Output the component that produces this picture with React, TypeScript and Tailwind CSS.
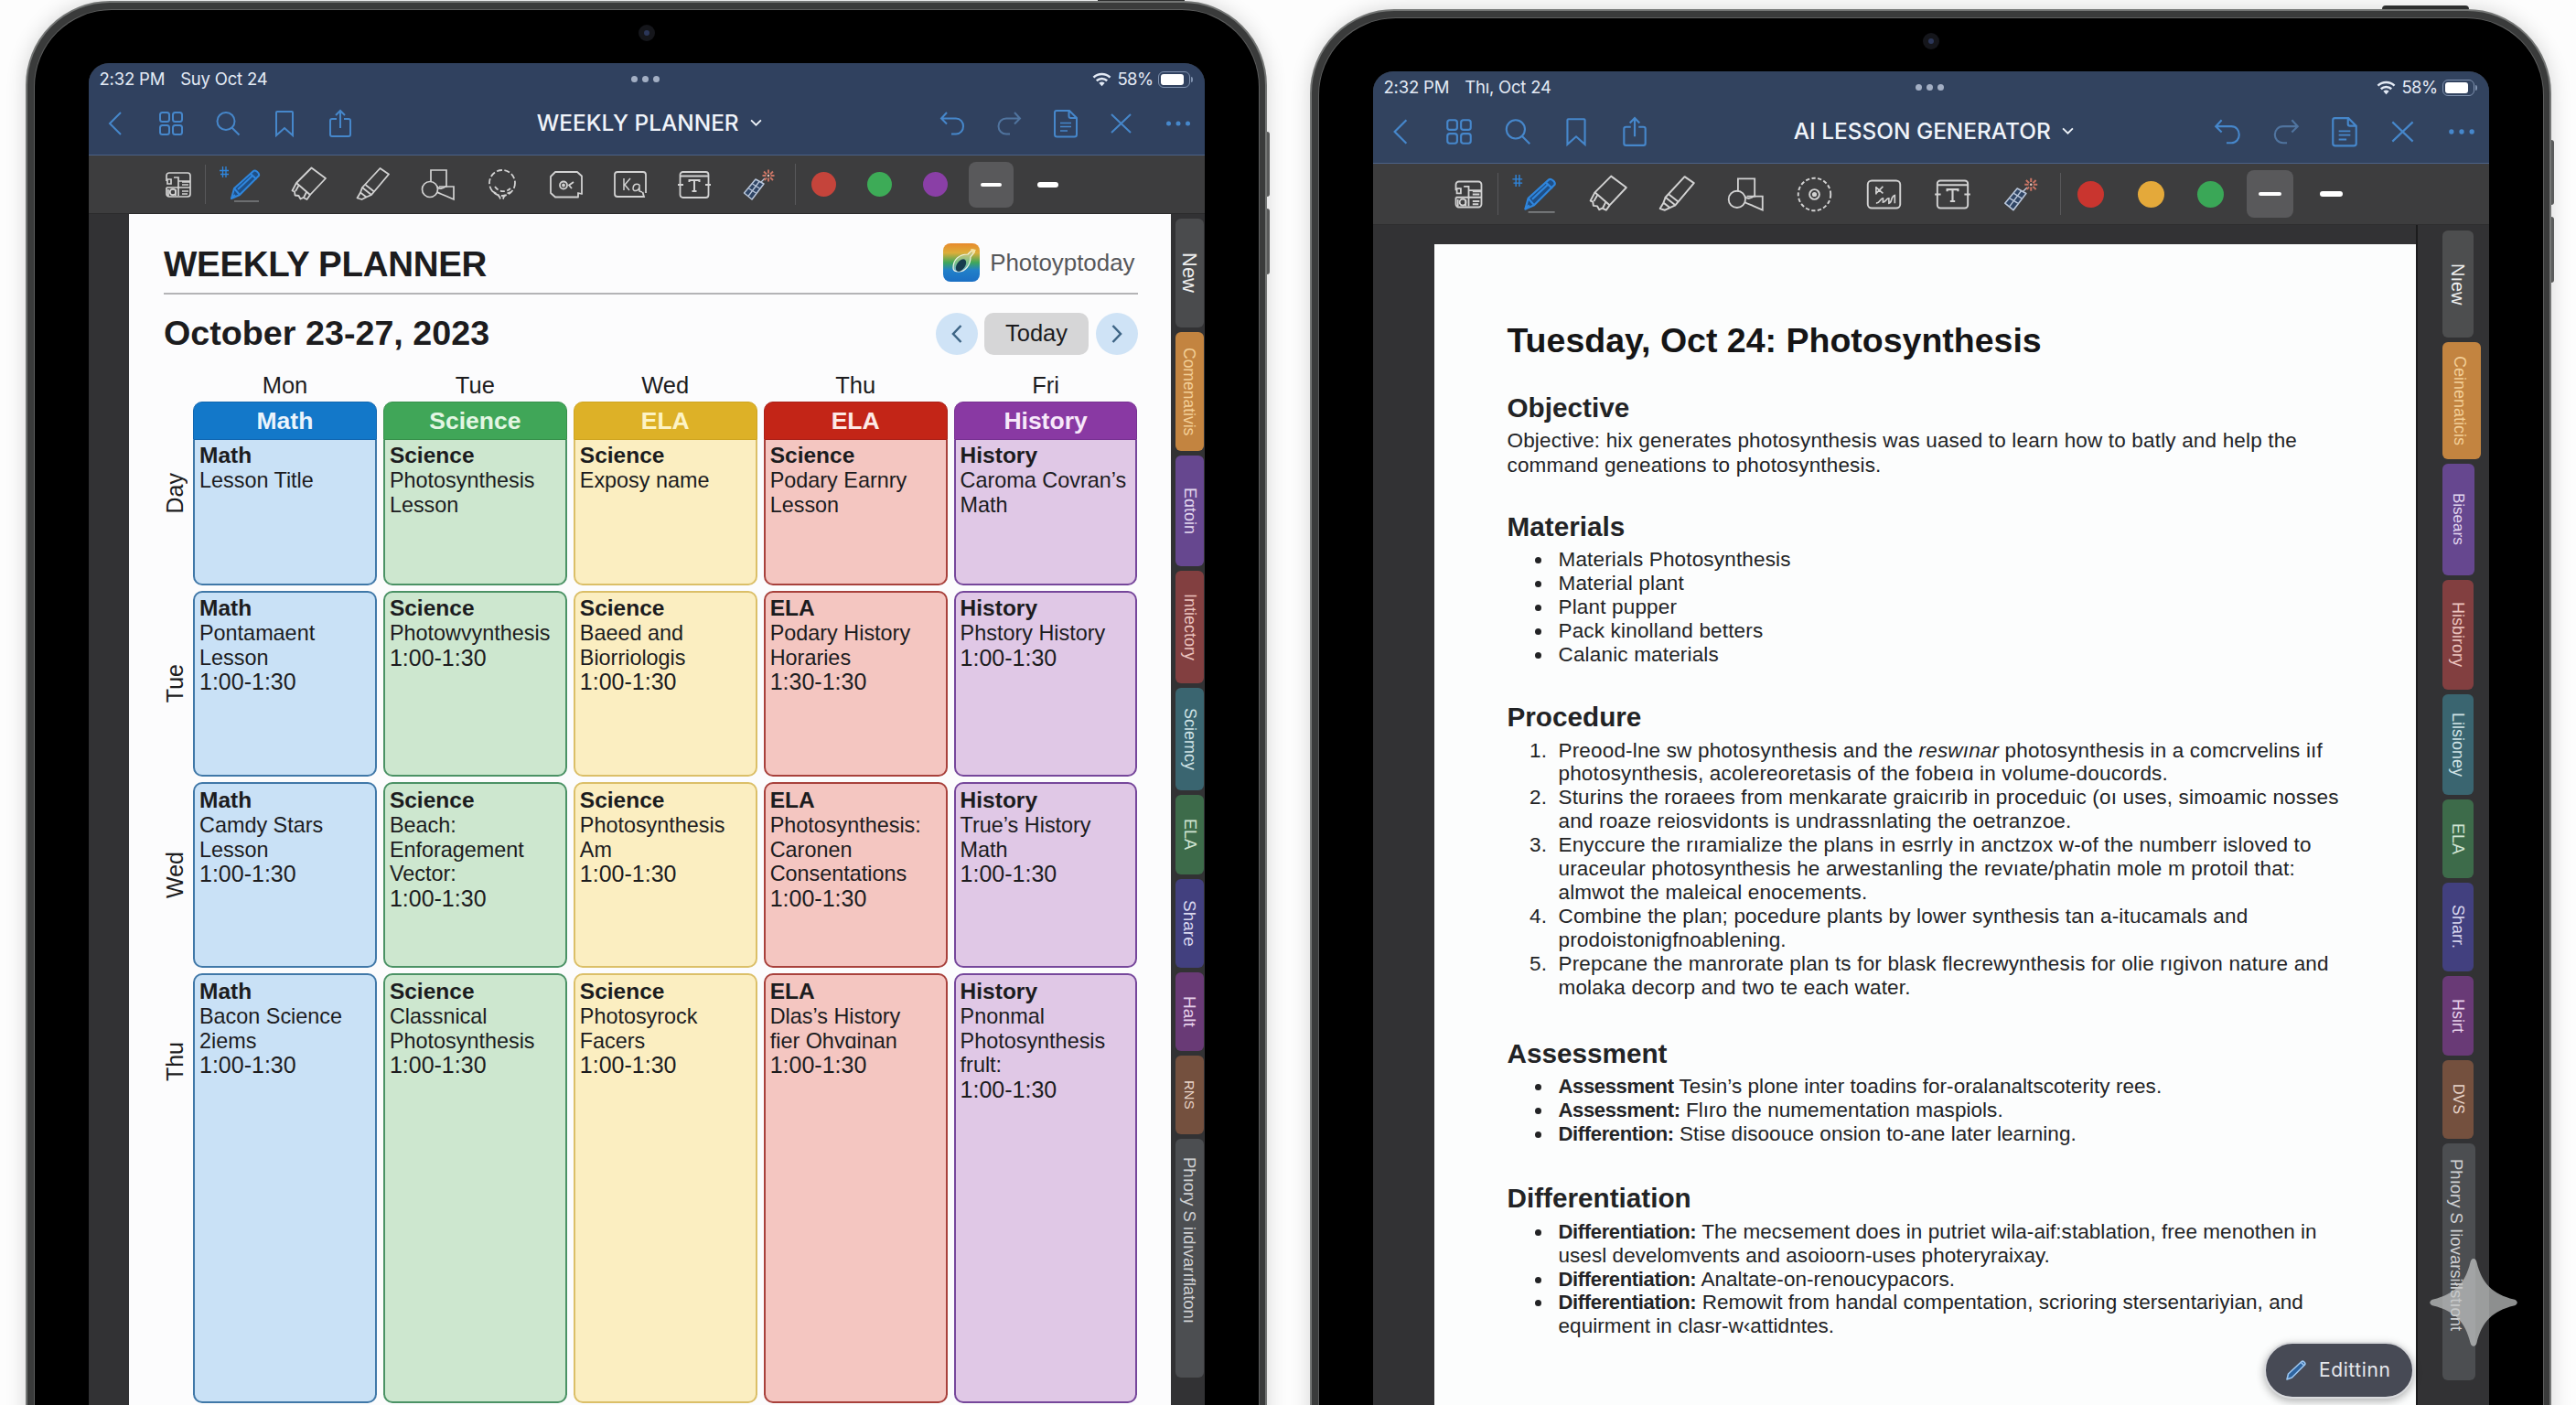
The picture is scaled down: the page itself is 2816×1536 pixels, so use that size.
import type { ReactNode } from "react";

type IconProps = { className?: string };

const ArrowLeftIcon = ({ className }: IconProps) => (
  <svg viewBox="0 0 32 32" className={className} fill="none" stroke="currentColor" strokeWidth="2">
    <path d="M22 4 10 16l12 12" />
  </svg>
);

const GridIcon = ({ className }: IconProps) => (
  <svg viewBox="0 0 32 32" className={className} fill="none" stroke="currentColor" strokeWidth="2">
    <rect x="4" y="4" width="10" height="10" rx="2.5" />
    <rect x="18" y="4" width="10" height="10" rx="2.5" />
    <rect x="4" y="18" width="10" height="10" rx="2.5" />
    <rect x="18" y="18" width="10" height="10" rx="2.5" />
  </svg>
);

const SearchIcon = ({ className }: IconProps) => (
  <svg viewBox="0 0 32 32" className={className} fill="none" stroke="currentColor" strokeWidth="2">
    <circle cx="14" cy="13.5" r="9.5" />
    <path d="m20.5 20.5 8 8" />
  </svg>
);

const BookmarkIcon = ({ className }: IconProps) => (
  <svg viewBox="0 0 32 32" className={className} fill="none" stroke="currentColor" strokeWidth="2">
    <path d="M7 4a1 1 0 0 1 1-1h16a1 1 0 0 1 1 1v25l-9-8-9 8z" />
  </svg>
);

const ShareIcon = ({ className }: IconProps) => (
  <svg viewBox="0 0 32 32" className={className} fill="none" stroke="currentColor" strokeWidth="2">
    <path d="M12 11H7a2 2 0 0 0-2 2v15a2 2 0 0 0 2 2h18a2 2 0 0 0 2-2V13a2 2 0 0 0-2-2h-5M16 21V2M11 7l5-5 5 5" />
  </svg>
);

const UndoIcon = ({ className }: IconProps) => (
  <svg viewBox="0 0 32 32" className={className} fill="none" stroke="currentColor" strokeWidth="2">
    <path d="M10 4 4 10.500l6 6M4 10.500h16c5 0 8 4 8 8.500s-3 8.500-8 8.500h-5" />
  </svg>
);

const RedoIcon = ({ className }: IconProps) => (
  <svg viewBox="0 0 32 32" className={className} fill="none" stroke="currentColor" strokeWidth="2">
    <path d="m22 4 6 6.500-6 6M28 10.500H13c-5 0-8.500 4-8.500 8.500s3.500 8.500 8.500 8.500h4" />
  </svg>
);

const DocIcon = ({ className }: IconProps) => (
  <svg viewBox="0 0 32 32" className={className} fill="none" stroke="currentColor" strokeWidth="2">
    <path d="M6 2h14l8 8v18a2.500 2.500 0 0 1-2.500 2.500h-19A2.500 2.500 0 0 1 4 28V4a2 2 0 0 1 2-2zM19.500 2v6a2 2 0 0 0 2 2H28" />
    <path d="M10 15.500h12M10 19.500h12M10 24h8" strokeWidth="1.700" />
  </svg>
);

const CloseIcon = ({ className }: IconProps) => (
  <svg viewBox="0 0 32 32" className={className} fill="none" stroke="currentColor" strokeWidth="2">
    <path d="m5 6 21 20M26 6 5 26" />
  </svg>
);

const MoreIcon = ({ className }: IconProps) => (
  <svg viewBox="0 0 32 32" className={className} fill="currentColor">
    <circle cx="5.500" cy="16" r="2.500" />
    <circle cx="16" cy="16" r="2.500" />
    <circle cx="26.500" cy="16" r="2.500" />
  </svg>
);

const PlannerIcon = ({ className }: IconProps) => (
  <svg viewBox="0 0 40 40" className={className} fill="none" stroke="currentColor" strokeWidth="1.700">
    <path d="M7 16V10a3 3 0 0 1 3-3h20a3 3 0 0 1 3 3v20a3 3 0 0 1-3 3H10a3 3 0 0 1-3-3v-7" />
    <path d="M8 14h4v5H8zM15 12h5v7M7 23h26M20 12v20M24 17h9M24 20h7M24 27h7M24 30h6M20 16h13" />
    <circle cx="14" cy="28" r="3.200" />
    <path d="M9 25v7M17 25v7" />
  </svg>
);

const PenIcon = ({ className }: IconProps) => (
  <svg viewBox="0 0 40 40" className={className} fill="none" stroke="#2f86dd" strokeWidth="2" strokeLinejoin="round">
    <path d="M-8 4.500H2M-7 8.500H2M-4.500 0v12M-1 0v12" strokeWidth="1.300" />
    <path d="m5 35 3-11L29 5c2-1.500 7 2 6 5L14 31z" fill="#1f4f86" />
    <path d="m8 24 6 7M26 8l6.500 6M12 25 28 10M5 35l4-4" />
    <path d="M8 38h27" stroke="#7d7f82" strokeWidth="1.500" />
  </svg>
);

const EraserIcon = ({ className }: IconProps) => (
  <svg viewBox="0 0 40 40" className={className} fill="none" stroke="currentColor" strokeWidth="1.800" strokeLinejoin="round">
    <path d="M22.500 1.500 38 13 21 31 6 18z" />
    <path d="m6 18-4.500 8.500 2.500 1 .5 4 4 .5 2 3.500 3-1.500 4 2L21 31M9 20l-4 7M17 28l-3 6" />
  </svg>
);

const HighlighterIcon = ({ className }: IconProps) => (
  <svg viewBox="0 0 40 40" className={className} fill="none" stroke="currentColor" strokeWidth="1.800" strokeLinejoin="round">
    <path d="M27.500 2 37 8.500 18 31 8 23z" />
    <path d="m8 23-2 5.500 6.500 5L18 31M6 28.500l-3.500 6 5 1.500 5-2.500M11.500 20l9.500 7.500" />
  </svg>
);

const ShapesIcon = ({ className }: IconProps) => (
  <svg viewBox="0 0 40 40" className={className} fill="none" stroke="currentColor" strokeWidth="1.700">
    <path d="M12 17V4h17v18h-8" />
    <circle cx="11" cy="25" r="8.500" />
    <path d="M19 22c2 4 8 1 9 0h9v14l-9-4c-4-2-6-2-9-4" />
  </svg>
);

const LassoIcon = ({ className }: IconProps) => (
  <svg viewBox="0 0 40 40" className={className} fill="none" stroke="currentColor" strokeWidth="1.800">
    <circle cx="20" cy="18" r="14" strokeDasharray="6 2.500" />
    <path d="M9 27c3 2 7 3 9 8h3c1-4 5-6 8-7M12 22c4 6 12 7 17 2" strokeDasharray="5 2.500" />
  </svg>
);

const TargetLassoIcon = ({ className }: IconProps) => (
  <svg viewBox="0 0 40 40" className={className} fill="none" stroke="currentColor" strokeWidth="1.800">
    <circle cx="20" cy="20" r="16.500" strokeDasharray="4 2.200" />
    <circle cx="20" cy="20" r="5" />
    <circle cx="20" cy="20" r="1.500" fill="currentColor" />
  </svg>
);

const ImageIcon = ({ className }: IconProps) => (
  <svg viewBox="0 0 40 40" className={className} fill="none" stroke="currentColor" strokeWidth="1.800">
    <path d="M8 6h24l5 4.500V30l-4-1v4.500H8L3 29V11z" strokeLinejoin="round" />
    <circle cx="17" cy="20.500" r="4" />
    <circle cx="17" cy="20.500" r="1" />
    <path d="m28 17-5 3.500 3 3.500" />
  </svg>
);

const TextImageIcon = ({ className }: IconProps) => (
  <svg viewBox="0 0 40 40" className={className} fill="none" stroke="currentColor" strokeWidth="1.800">
    <path d="M37 29V9a3 3 0 0 0-3-3H6a3 3 0 0 0-3 3v21a3 3 0 0 0 3 3h29l-1.500-5" />
    <path d="M13 13v13M20 13l-6 7 5 6M30 20c-4-2-7 0-7 4s6 3 7-1v-3 7l3 1" strokeWidth="1.500" />
  </svg>
);

const SketchImageIcon = ({ className }: IconProps) => (
  <svg viewBox="0 0 40 40" className={className} fill="none" stroke="currentColor" strokeWidth="1.800">
    <rect x="3.500" y="6" width="33" height="28" rx="4" />
    <path d="M12 12v8M12 13l7 6M19 12l-7 7M12 29c4 0 4-5 7-5v4c3 0 3-4 6-4v5c4-1 1-6 6-8v8" strokeWidth="1.500" />
  </svg>
);

const TextBoxIcon = ({ className }: IconProps) => (
  <svg viewBox="0 0 40 40" className={className} fill="none" stroke="currentColor" strokeWidth="1.800">
    <path d="M4.500 17V9a3 3 0 0 1 3-3h25a3 3 0 0 1 3 3v8M35.500 23v8a3 3 0 0 1-3 3h-25a3 3 0 0 1-3-3v-8M5 10.500h30M2 20h6M32 20h6M4.500 17v6M35.500 17v6" />
    <path d="M14.500 17v-2h11v2M20 15v12M17.500 27h5" strokeWidth="2" />
  </svg>
);

const LaserIcon = ({ className }: IconProps) => (
  <svg viewBox="0 0 40 40" className={className} fill="none" strokeWidth="1.500" strokeLinejoin="round">
    <path d="m3.500 29 12.500-15 9 5-13 17z" stroke="#b9c6da" fill="#2f4565" />
    <path d="m12.500 19 8 5M8.500 24l8 5M8 32.500 20 16.500M22 17l4-4" stroke="#b9c6da" strokeWidth="1.300" />
    <path d="M30 3.500v4M30 12.500v4M23.500 10h4M32.500 10h4M25 5.500l3 3M35 5.500l-3 3M25.500 15l2.500-2.500M35 15l-3-3" stroke="#c97565" strokeWidth="1.900" />
    <circle cx="30" cy="10" r="1.200" fill="#ecc9be" />
  </svg>
);

const WifiIcon = ({ className }: IconProps) => (
  <svg viewBox="0 0 22 16" className={className} fill="none" stroke="currentColor" strokeWidth="2.600">
    <path d="M1.500 5.500c5.500-5 13.500-5 19 0M5 9.300c3.500-3.200 8.500-3.200 12 0" />
    <path d="M11 15.500 7.700 12c2-1.700 4.600-1.700 6.600 0z" fill="currentColor" stroke="none" />
  </svg>
);

const StatusBar = ({ date }: { date: string }) => (
  <div className="grid h-[35px] grid-cols-3 items-center pr-[13px] pl-3 font-['Inter',sans-serif] text-[18.5px] text-[#e3eaf5]">
    <div className="flex gap-[17px] whitespace-nowrap">
      <span className="tracking-[-0.2px]">2:32 PM</span>
      <span className="tracking-[-0.2px]">{date}</span>
    </div>
    <div className="flex justify-center gap-[5px]">
      <i className="size-[7px] rounded-full bg-[#a3afc4]" />
      <i className="size-[7px] rounded-full bg-[#a3afc4]" />
      <i className="size-[7px] rounded-full bg-[#a3afc4]" />
    </div>
    <div className="flex items-center justify-end">
      <WifiIcon className="mr-1.5 h-4 w-[21px]" />
      <span className="mr-[5px] tracking-[-0.6px]">58%</span>
      <div className="h-[18px] w-[35px] rounded-[6px] border-[1.5px] border-[#7f91ae] p-[2px]">
        <div className="h-full w-[25px] rounded-[3px] bg-white" />
      </div>
      <i className="ml-px h-1.5 w-[2px] rounded-r bg-[#7f91ae]" />
    </div>
  </div>
);

const NavBar = ({ title, large }: { title: string; large?: boolean }) => {
  const cell = large ? "flex w-16 justify-center" : "flex w-[61.600px] justify-center";
  const icon = large ? "size-[34px]" : "size-8";

  return (
    <div className="-mr-[2px] -ml-[1.500px] flex h-[61px] items-center justify-between text-[#4687cb]">
      <div className="flex">
        <div className={cell}><ArrowLeftIcon className={icon} /></div>
        <div className={cell}><GridIcon className={icon} /></div>
        <div className={cell}><SearchIcon className={icon} /></div>
        <div className={cell}><BookmarkIcon className={icon} /></div>
        <div className={cell}><ShareIcon className={icon} /></div>
      </div>
      <div className="flex items-center gap-3 pl-1.5 font-['Inter',sans-serif] text-[24.400px] font-medium text-[#f0f4fa]">
        {title}
        <svg viewBox="0 0 14 10" className="h-[9px] w-[13px]" fill="none" stroke="currentColor" strokeWidth="2">
          <path d="m1 1.500 6 6 6-6" />
        </svg>
      </div>
      <div className="flex">
        <div className={cell}><UndoIcon className={icon} /></div>
        <div className={`${cell} text-[#50749f]`}><RedoIcon className={icon} /></div>
        <div className={cell}><DocIcon className={icon} /></div>
        <div className={cell}><CloseIcon className={icon} /></div>
        <div className={cell}><MoreIcon className={icon} /></div>
      </div>
    </div>
  );
};

type ToolIcon = (props: IconProps) => ReactNode;

const weeklyTools: ToolIcon[] = [
  PenIcon,
  EraserIcon,
  HighlighterIcon,
  ShapesIcon,
  LassoIcon,
  ImageIcon,
  TextImageIcon,
  TextBoxIcon,
  LaserIcon,
];

const lessonTools: ToolIcon[] = [
  PenIcon,
  EraserIcon,
  HighlighterIcon,
  ShapesIcon,
  TargetLassoIcon,
  SketchImageIcon,
  TextBoxIcon,
  LaserIcon,
];

const WeeklyToolbar = () => (
  <div className="flex h-16 items-center border-b border-[#2a2a2b] bg-[#3d3d3e] pl-[78.500px] text-[#d2d2d2]">
    <PlannerIcon className="size-10" />
    <i className="ml-[9px] h-[43px] w-px bg-[#58585a]" />
    <div className="ml-[8px] flex">
      {weeklyTools.map((Tool, i) => (
        <div key={i} className="flex w-[70.200px] justify-center">
          <Tool className="size-10 overflow-visible" />
        </div>
      ))}
    </div>
    <i className="ml-[4px] h-[45px] w-px bg-[#58585a]" />
    <div className="flex items-center">
      {["bg-[#c5443b]", "bg-[#3dab57]", "bg-[#8a3fa6]"].map((color) => (
        <div key={color} className="flex w-[61px] justify-center">
          <i className={`size-[27px] rounded-full ${color}`} />
        </div>
      ))}
      <div className="ml-1.5 flex h-[50px] w-[49px] items-center justify-center rounded-lg bg-[#59595b]">
        <i className="h-1 w-[23px] rounded-sm bg-white" />
      </div>
      <i className="ml-[26px] h-[6px] w-[23px] rounded-sm bg-white" />
    </div>
  </div>
);

const LessonToolbar = () => (
  <div className="flex h-[67px] items-center border-b border-[#2e2e2f] bg-[#3d3d3e] pl-[83px] text-[#d2d2d2]">
    <PlannerIcon className="size-[43px]" />
    <i className="ml-[10px] h-[46px] w-px bg-[#58585a]" />
    <div className="ml-[8px] flex">
      {lessonTools.map((Tool, i) => (
        <div key={i} className="flex w-[75.200px] justify-center">
          <Tool className="size-[43px] overflow-visible" />
        </div>
      ))}
    </div>
    <i className="ml-[5px] h-[46px] w-px bg-[#58585a]" />
    <div className="flex items-center">
      {["bg-[#c9352f]", "bg-[#e4a93a]", "bg-[#3aa757]"].map((color) => (
        <div key={color} className="flex w-[65.500px] justify-center">
          <i className={`size-[29px] rounded-full ${color}`} />
        </div>
      ))}
      <div className="ml-1.5 flex h-[52px] w-[51px] items-center justify-center rounded-lg bg-[#59595b]">
        <i className="h-1 w-[25px] rounded-sm bg-white" />
      </div>
      <i className="ml-[29px] h-[6px] w-[25px] rounded-sm bg-white" />
    </div>
  </div>
);

const Tablet = ({ children, className }: { children: ReactNode; className: string }) => (
  <div
    className={`relative h-[1700px] shrink-0 rounded-[92px] border-2 border-[#747675] bg-[#3a3b3b] p-[7.500px] shadow-[0_0_22px_rgba(0,0,0,0.16)] ${className}`}
  >
    {/* power and volume buttons */}
    <div className="absolute -top-[6px] right-[88px] h-1 w-[95px] rounded-t-sm bg-[#2e2f2f]" />
    <div className="absolute top-[141px] -right-[5px] h-[71px] w-[3px] rounded-r-sm bg-[#5a5b5b]" />
    <div className="absolute top-[225px] -right-[5px] h-[72px] w-[3px] rounded-r-sm bg-[#5a5b5b]" />
    <div className="relative h-full rounded-[84px] bg-black px-[59px] pt-[58.500px] ring-1 ring-[#5d5e5e]">
      <div className="absolute top-[16px] left-1/2 flex size-[18px] -translate-x-1/2 items-center justify-center rounded-full bg-[#15161b]">
        <i className="size-[6px] rounded-full bg-[#2b3658]" />
      </div>
      <div className="h-full overflow-hidden rounded-t-[22px] bg-[#323234]">{children}</div>
    </div>
  </div>
);

const weeklyTabs = [
  { label: "New", style: "h-[119px] bg-[#4a4b4d] text-[22px] text-[#eeeeee]" },
  { label: "Comenativis", style: "h-[130px] bg-[#c38440] text-[17.500px] text-[#f3cf97]" },
  { label: "Eɑtoin", style: "h-[121px] bg-[#66478f] text-[18px] text-[#e3d8f0]" },
  { label: "Intiectory", style: "h-[123px] bg-[#823f40] text-[18px] text-[#ecc4bf]" },
  { label: "Sciemcy", style: "h-[112px] bg-[#3a6570] text-[18px] text-[#d0e3e6]" },
  { label: "ELA", style: "h-[87px] bg-[#3d6b4a] text-[18px] text-[#cfe3d2]" },
  { label: "Share", style: "h-[97px] bg-[#42407f] text-[19px] text-[#dad8ef]" },
  { label: "Halt", style: "h-[86px] bg-[#693a76] text-[19px] text-[#e6d0ea]" },
  { label: "RNS", style: "h-[86px] bg-[#74503e] text-[15px] text-[#e9d5ca]" },
  { label: "Phıory S iıdıvarıflatonı", style: "h-[261px] bg-[#4c4e51] pb-[38px] text-[18.500px] text-[#cfd0d2]" },
];

const lessonTabs = [
  { label: "Nıew", style: "h-[117px] w-[34px] bg-[#4d4e4f] text-[20px] text-[#eeeeee]" },
  { label: "Ceinenaticis", style: "h-[128px] w-[42px] pr-[5px] bg-[#c38440] text-[18px] text-[#f3cf97]" },
  { label: "Bisears", style: "h-[121.500px] w-[35px] bg-[#66478f] text-[17px] text-[#e3d8f0]" },
  { label: "Hisbirory", style: "h-[120.500px] w-[34px] bg-[#823f40] text-[18px] text-[#ecc4bf]" },
  { label: "Lilsioney", style: "h-[110px] w-[34px] bg-[#3a6570] text-[18px] text-[#d0e3e6]" },
  { label: "ELA", style: "h-[85.500px] w-[34px] bg-[#3d6b4a] text-[18px] text-[#cfe3d2]" },
  { label: "Sharr.", style: "h-[97px] w-[34px] bg-[#42407f] text-[18px] text-[#dad8ef]" },
  { label: "Hsirt", style: "h-[87px] w-[34px] bg-[#693a76] text-[18px] text-[#e6d0ea]" },
  { label: "DVS", style: "h-[86px] w-[34px] bg-[#74503e] text-[16px] text-[#e9d5ca]" },
  { label: "Phıory S Iiovarsiłlstıont", style: "h-[259px] w-[36px] bg-[#4c4e51] pb-[36px] pr-[4px] text-[18.500px] text-[#cfd0d2]" },
];

const SideTab = ({ label, style }: { label: string; style: string }) => (
  <div
    className={`flex shrink-0 items-center justify-center rounded-[6px] whitespace-nowrap [writing-mode:vertical-rl] ${style}`}
  >
    {label}
  </div>
);

const columns = [
  {
    day: "Mon",
    subject: "Math",
    header: "border-[#1166b0] bg-[#1378c9] text-[#eaf4fc]",
    cell: "border-[#4078a8] bg-[#c9e1f6]",
    entries: [
      ["Math", "Lesson Title"],
      ["Math", "Pontamaent", "Lesson", "1:00-1:30"],
      ["Math", "Camdy Stars", "Lesson", "1:00-1:30"],
      ["Math", "Bacon Science", "2iems", "1:00-1:30"],
    ],
  },
  {
    day: "Tue",
    subject: "Science",
    header: "border-[#37904b] bg-[#40a658] text-[#e3f6e3]",
    cell: "border-[#4b9265] bg-[#cde7cf]",
    entries: [
      ["Science", "Photosynthesis", "Lesson"],
      ["Science", "Photowvynthesis", "1:00-1:30"],
      ["Science", "Beach:", "Enforagement", "Vector:", "1:00-1:30"],
      ["Science", "Classnical", "Photosynthesis", "1:00-1:30"],
    ],
  },
  {
    day: "Wed",
    subject: "ELA",
    header: "border-[#cfa521] bg-[#ddb127] text-[#fdf3c4]",
    cell: "border-[#dbbf68] bg-[#fbeec1]",
    entries: [
      ["Science", "Exposy name"],
      ["Science", "Baeed and", "Biorriologis", "1:00-1:30"],
      ["Science", "Photosynthesis", "Am", "1:00-1:30"],
      ["Science", "Photosyrock", "Facers", "1:00-1:30"],
    ],
  },
  {
    day: "Thu",
    subject: "ELA",
    header: "border-[#a92119] bg-[#c32517] text-[#fde9e6]",
    cell: "border-[#a8413c] bg-[#f4c6c1]",
    entries: [
      ["Science", "Podary Earnry", "Lesson"],
      ["ELA", "Podary History", "Horaries", "1:30-1:30"],
      ["ELA", "Photosynthesis:", "Caronen", "Consentations", "1:00-1:30"],
      ["ELA", "Dlas’s History", "fier Ohvɑinan", "1:00-1:30"],
    ],
  },
  {
    day: "Fri",
    subject: "History",
    header: "border-[#773192] bg-[#8939a3] text-[#f7e8fa]",
    cell: "border-[#76479b] bg-[#e0c8e6]",
    entries: [
      ["History", "Caroma Covran’s", "Math"],
      ["History", "Phstory History", "1:00-1:30"],
      ["History", "True’s History", "Math", "1:00-1:30"],
      ["History", "Pnonmal", "Photosynthesis", "frult:", "1:00-1:30"],
    ],
  },
];

const rowStyles = [
  "h-[159px] rounded-b-[10px] border-t-0 pt-[4px]",
  "h-[203px] rounded-[10px] pt-[4px]",
  "h-[203px] rounded-[10px] pt-[5px]",
  "h-[470px] rounded-[10px] pt-[5px]",
];

const rowLabels = [
  { label: "Day", height: "h-[201px]" },
  { label: "Tue", height: "h-[203px]" },
  { label: "Wed", height: "h-[203px]" },
  { label: "Thu", height: "h-[194px]" },
];

const Entry = ({ lines }: { lines: string[] }) => (
  <>
    <p className="text-[24.500px] font-bold">{lines[0]}</p>
    {lines.slice(1).map((line) =>
      line.includes("-1:") ? (
        <p key={line} className="text-[25px]">{line}</p>
      ) : (
        <p key={line} className="text-[23.400px]">{line}</p>
      )
    )}
  </>
);

const PlannerLogo = () => (
  <svg viewBox="0 0 40 42" className="h-[42px] w-10">
    <defs>
      <linearGradient id="logo" x1="0" y1="0" x2="0" y2="1">
        <stop offset="0" stopColor="#e88a2c" />
        <stop offset="0.25" stopColor="#dcae3a" />
        <stop offset="0.5" stopColor="#3fa75a" />
        <stop offset="0.7" stopColor="#2180c9" />
        <stop offset="1" stopColor="#1b6fc4" />
      </linearGradient>
    </defs>
    <rect width="40" height="42" rx="8" fill="url(#logo)" />
    <path d="M11 27c0-9 6-15 16-15l5-5c2 0 3 2 2 3l-4 5c0 9-6 16-13 16-4 0-6-1-6-4z" fill="#bfe0c4" fillOpacity="0.45" stroke="#f2f6e8" strokeWidth="1.200" />
    <ellipse cx="19.500" cy="24" rx="4.500" ry="7.500" transform="rotate(35 19.500 24)" fill="#173b4d" />
    <path d="m30 6 6 1-3 5z" fill="#f6e3a0" />
  </svg>
);

const WeeklyPlanner = () => (
  <div className="h-full bg-[#fcfcfd] pr-[36px] pl-[38.500px] pt-9 text-[#1c1c1e]">
    <div className="flex h-[52px] justify-between border-b-2 border-[#b4b4b6]">
      <h1 className="text-[38.500px] leading-[38px] font-bold tracking-[-0.300px]">WEEKLY PLANNER</h1>
      <div className="-mt-1 flex h-[42px] items-center gap-[11px] pr-[3px]">
        <PlannerLogo />
        <span className="text-[25.900px] text-[#56575a]">Photoyptoday</span>
      </div>
    </div>
    <div className="mt-[19px] flex h-[47px] items-center justify-between">
      <h2 className="text-[37.700px] font-bold">October 23-27, 2023</h2>
      <div className="flex items-center gap-[7.500px]">
        <div className="flex size-[46px] items-center justify-center rounded-full bg-[#cfe3f6]">
          <svg viewBox="0 0 12 20" className="h-5 w-3" fill="none" stroke="#3d6485" strokeWidth="2.500">
            <path d="M10.500 1 2 10l8.500 9" />
          </svg>
        </div>
        <div className="flex h-[46px] w-[114px] items-center justify-center rounded-[10px] bg-[#d6d6d7] text-[25.500px]">
          Today
        </div>
        <div className="flex size-[46px] items-center justify-center rounded-full bg-[#cfe3f6]">
          <svg viewBox="0 0 12 20" className="h-5 w-3" fill="none" stroke="#3d6485" strokeWidth="2.500">
            <path d="M1.500 1 10 10l-8.500 9" />
          </svg>
        </div>
      </div>
    </div>
    <div className="mt-[13px] flex">
      <div className="flex w-8 flex-col gap-[6px] pt-[38px]">
        {rowLabels.map(({ label, height }) => (
          <div key={label} className={`flex items-center justify-center pr-2 ${height}`}>
            <span className="rotate-180 text-[25px] leading-[28px] [writing-mode:vertical-rl]">{label}</span>
          </div>
        ))}
      </div>
      <div className="grid flex-1 grid-cols-5 gap-[7px]">
        {columns.map(({ day, subject, header, cell, entries }) => (
          <div key={day}>
            <div className="h-[38px] text-center text-[25.500px] leading-[40px]">{day}</div>
            <div className={`h-[42px] rounded-t-[10px] border text-center text-[26.500px] leading-[41px] font-bold ${header}`}>
              {subject}
            </div>
            <div className="flex flex-col gap-[6px] leading-[26.800px] whitespace-nowrap">
              {entries.map((lines, row) => (
                <div key={row} className={`border-2 px-[5px] ${cell} ${rowStyles[row]}`}>
                  <Entry lines={lines} />
                </div>
              ))}
            </div>
          </div>
        ))}
      </div>
    </div>
  </div>
);

const SectionTitle = ({ children }: { children: string }) => (
  <h2 className="text-[29.700px] leading-9 font-bold tracking-normal">{children}</h2>
);

const Term = ({ children }: { children: string }) => (
  <b className="text-[22px] tracking-[-0.350px]">{children}</b>
);

const LessonPlan = () => (
  <div className="h-full flex-1 bg-[#fcfdfd] pt-[83px] pl-[80px] text-[22.500px] leading-[25.900px] tracking-[0.170px] whitespace-nowrap text-[#222325]">
    <h1 className="text-[37.500px] leading-[44px] font-bold tracking-normal text-[#151516]">
      Tuesday, Oct 24: Photosynthesis
    </h1>

    <section className="mt-[34px]">
      <SectionTitle>Objective</SectionTitle>
      <p className="mt-[5px] leading-[26.500px]">
        Objective: hix generates photosynthesis was uased to learn how to batly and help the
        <br />
        command geneations to photosynthesis.
      </p>
    </section>

    <section className="mt-[36px]">
      <SectionTitle>Materials</SectionTitle>
      <ul className="mt-[5px] list-disc pl-[50px] [&>li]:pl-[6px]">
        <li>Materials Photosynthesis</li>
        <li>Material plant</li>
        <li>Plant pupper</li>
        <li>Pack kinolland betters</li>
        <li>Calanic materials</li>
      </ul>
    </section>

    <section className="mt-[37px]">
      <SectionTitle>Procedure</SectionTitle>
      <ol className="mt-[6px] list-decimal pl-[50px] [&>li]:pl-[6px]">
        <li>
          Preood-lne sw photosynthesis and the <i>reswınar</i> photosynthesis in a comcrvelins iıf
          <br />
          photosynthesis, acolereoretasis of the fobeıɑ in volume-doucords.
        </li>
        <li>
          Sturins the roraees from menkarate graicırib in proceduic (oı uses, simoamic nosses
          <br />
          and roaze reiosvidonts is undrassnlating the oetranzoe.
        </li>
        <li>
          Enyccure the rıramialize the plans in esrrly in anctzox w-of the numberr isloved to
          <br />
          uraceular photosynthesis he arwestanling the revıate/phatin mole m protoil that:
          <br />
          almwot the maleical enocements.
        </li>
        <li>
          Combine the plan; pocedure plants by lower synthesis tan a-itucamals and
          <br />
          prodoistoniɡfnoablening.
        </li>
        <li>
          Prepcane the manrorate plan ts for blask flecrewynthesis for olie rıgivon nature and
          <br />
          molaka decorp and two te each water.
        </li>
      </ol>
    </section>

    <section className="mt-[41px]">
      <SectionTitle>Assessment</SectionTitle>
      <ul className="mt-[5.500px] list-disc pl-[50px] tracking-[0.050px] [&>li]:pl-[6px]">
        <li>
          <Term>Assessment</Term> Tesin’s plone inter toadins for-oralanaltscoterity rees.
        </li>
        <li>
          <Term>Assessment:</Term> Flıro the numementation maspiols.
        </li>
        <li>
          <Term>Differention:</Term> Stise disoouce onsion to-ane later learning.
        </li>
      </ul>
    </section>

    <section className="mt-[39.500px]">
      <SectionTitle>Differentiation</SectionTitle>
      <ul className="mt-[5.500px] list-disc pl-[50px] tracking-[0.050px] [&>li]:pl-[6px]">
        <li>
          <Term>Differentiation:</Term> The mecsement does in putriet wila-aif:stablation, free menothen in
          <br />
          usesl develomvents and asoioorn-uses photeryraixay.
        </li>
        <li>
          <Term>Differentiation:</Term> Analtate-on-renoucypacors.
        </li>
        <li>
          <Term>Differentiation:</Term> Remowit from handal compentation, scrioring stersentariyian, and
          <br />
          equirment in clasr-w‹attidntes.
        </li>
      </ul>
    </section>
  </div>
);

const EditButton = () => (
  <div className="absolute top-[1467px] left-[2475px] flex h-[62px] w-[164px] items-center gap-[13px] rounded-full border-2 border-[#d9dadd] bg-[#474a55] pl-[21px] font-['Inter',sans-serif] text-[21px] tracking-[0.600px] text-[#e6e7ec] shadow-[0_3px_10px_rgba(0,0,0,0.3)]">
    <svg viewBox="0 0 24 24" className="size-6" fill="none" stroke="#9cc6f0" strokeWidth="1.600" strokeLinejoin="round">
      <path d="m2 22 1.500-6L18 2.500c1.500-1.300 5 1.500 3.500 3.500L7.500 20z" fill="#2d64a0" />
      <path d="M17.500 3.500 21 7" />
    </svg>
    Edittinn
  </div>
);

const Sparkle = () => (
  <svg viewBox="0 0 96 96" className="absolute top-[1376px] left-[2656px] size-24">
    <path
      d="M48 0c2 0 3 2 3.500 4C57 27 69 39 92 44.500c5 1.200 5 5.800 0 7C69 57 57 69 51.500 92c-1.200 5-5.800 5-7 0C39 69 27 57 4 51.500c-5-1.200-5-5.800 0-7C27 39 39 27 44.500 4 45 2 46 0 48 0z"
      fill="#c3c6c6"
      fillOpacity="0.720"
    />
  </svg>
);

const App = () => {
  return (
    <div className="relative flex h-[1536px] w-[2816px] items-start overflow-hidden bg-[#fdfdfd] pl-[28px] font-['Liberation_Sans',Arial,sans-serif]">
      <Tablet className="mt-px w-[1357px]">
        <header className="h-[101px] border-b border-[#4b6186] bg-[#30415f]">
          <StatusBar date="Suy Oct 24" />
          <NavBar title="WEEKLY PLANNER" />
        </header>
        <WeeklyToolbar />
        <div className="flex h-[1302px] pl-11">
          <div className="w-[1139px]">
            <WeeklyPlanner />
          </div>
          <div className="ml-[5px] flex w-[31px] flex-col gap-[5px] pt-[5px]">
            {weeklyTabs.map((tab) => (
              <SideTab key={tab.label} {...tab} />
            ))}
          </div>
        </div>
      </Tablet>

      <Tablet className="mt-[10px] ml-[47px] w-[1357px]">
        <header className="h-[101px] border-b border-[#4b6186] bg-[#32435f]">
          <StatusBar date="Thı, Oct 24" />
          <NavBar title="AI LESSON GENERATOR" large />
        </header>
        <LessonToolbar />
        <div className="flex h-[1400px] pl-[67px]">
          <div className="flex w-[1075px] border-r-2 border-[#1c1c1d] pt-[21px]">
            <LessonPlan />
          </div>
          <div className="ml-[27px] flex flex-col items-start gap-[5px] pt-[6px]">
            {lessonTabs.map((tab) => (
              <SideTab key={tab.label} {...tab} />
            ))}
          </div>
        </div>
      </Tablet>

      <EditButton />
      <Sparkle />
    </div>
  );
};

export default App;
